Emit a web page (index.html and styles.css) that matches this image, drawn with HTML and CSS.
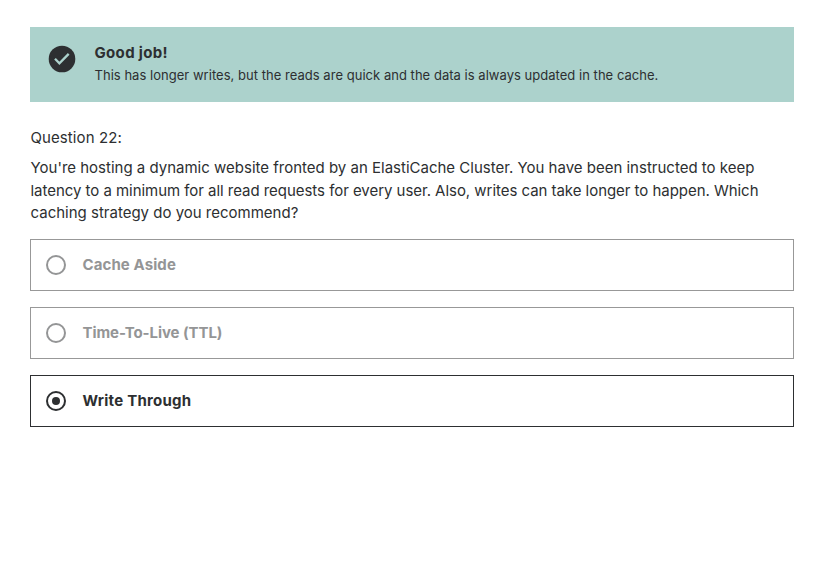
FILE: index.html
```html
<!DOCTYPE html>
<html lang="en">
<head>
<meta charset="utf-8">
<title>Quiz</title>
<link rel="stylesheet" href="styles.css">
</head>
<body>
<main class="quiz">
  <section class="feedback">
    <svg class="feedback-icon" viewBox="0 0 28 28" aria-hidden="true"><circle cx="14" cy="14" r="13.3" fill="#2d2f31"/><path d="M7 13.8l4.4 4.5 9.3-9.4" fill="none" stroke="#acd2cc" stroke-width="2.3"/></svg>
    <div>
      <h1 class="feedback-title">Good job!</h1>
      <p class="feedback-text">This has longer writes, but the reads are quick and the data is always updated in the cache.</p>
    </div>
  </section>
  <p class="number">Question 22:</p>
  <p class="prompt">You're hosting a dynamic website fronted by an ElastiCache Cluster. You have been instructed to keep<br><span class="line-two">latency to a minimum for all read requests for every user. Also, writes can take longer to happen. Which</span><br>caching strategy do you recommend?</p>
  <ul class="answers">
    <li class="answer"><span class="radio"></span><span class="label-aside">Cache Aside</span></li>
    <li class="answer"><span class="radio"></span><span class="label-ttl">Time-To-Live (TTL)</span></li>
    <li class="answer selected"><span class="radio"></span><span class="label-through">Write Through</span></li>
  </ul>
</main>
</body>
</html>
```
FILE: styles.css
```css
* { box-sizing: border-box; margin: 0; padding: 0; }
body { background: #fff; color: #2d2f31; font-family: Inter, "Liberation Sans", sans-serif; }
.quiz { padding: 27px 42px 0 30px; }
.feedback { display: flex; height: 75px; padding: 16px 18px; gap: 18.5px; background: #acd2cc; }
.feedback-icon { flex: none; width: 28px; height: 28px; margin-top: 2px; }
.feedback-title { font-size: 15px; line-height: 20px; font-weight: 700; letter-spacing: 0.33px; }
.feedback-text { font-size: 13px; line-height: 20px; margin-top: 2px; white-space: nowrap; letter-spacing: 0.03px; }
.number { font-size: 15px; line-height: 22px; margin-top: 25px; padding-left: 0.5px; letter-spacing: 0.09px; }
.prompt { font-size: 15px; line-height: 22.5px; margin-top: 8px; padding-left: 0.5px; white-space: nowrap; }
.line-two { letter-spacing: -0.04px; }
.answers { list-style: none; display: grid; gap: 16px; margin-top: 14px; }
.answer { display: flex; align-items: center; gap: 16.5px; height: 52px; padding: 0 15px; border: 1px solid #989898; color: #949596; font-size: 15px; font-weight: 700; }
.label-aside { letter-spacing: 0.1px; }
.label-ttl { letter-spacing: -0.07px; }
.label-through { letter-spacing: 0.25px; }
.selected { border-color: #2d2f31; color: #2d2f31; }
.radio { display: grid; place-items: center; width: 20px; height: 20px; border: 2px solid currentColor; border-radius: 50%; }
.selected .radio::after { content: ""; width: 8px; height: 8px; border-radius: 50%; background: currentColor; }
```
